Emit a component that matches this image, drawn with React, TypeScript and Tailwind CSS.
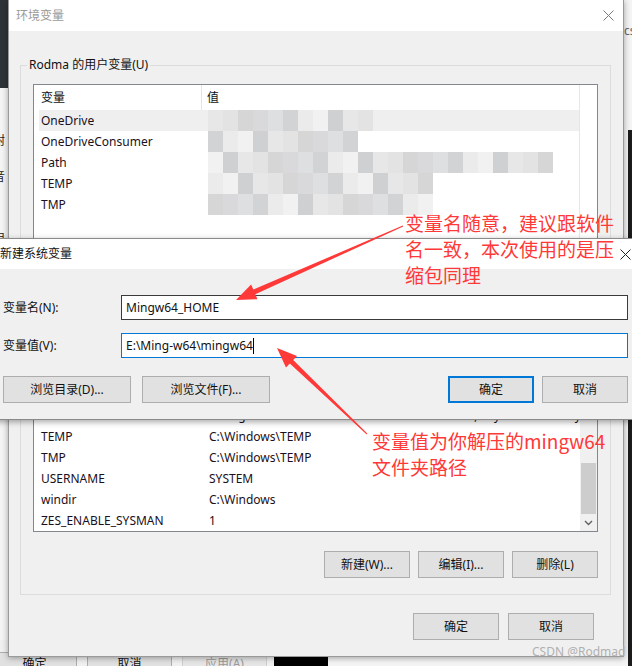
import React from "react";

const ui = "font-['Noto_Sans','Noto_Sans_CJK_SC',sans-serif]";
const cjk = "font-['Noto_Sans_CJK_SC','Noto_Sans',sans-serif]";

// pixelated "blurred" value cells
const palette = ["#d9d9db", "#e3e3e3", "#d2d3d5", "#ebebeb", "#dedfe0", "#cfd0d2", "#e7e7e8", "#f1f1f1", "#d6d6d6"];

function mosaic(seed: number, count: number) {
  let s = seed;
  const out: string[] = [];
  for (let i = 0; i < count; i++) {
    s = (s * 9301 + 49297) % 233280;
    out.push(palette[s % palette.length]);
  }
  return out;
}

const userRows = [
  { name: "OneDrive", blocks: 11, selected: true },
  { name: "OneDriveConsumer", blocks: 10 },
  { name: "Path", blocks: 23 },
  { name: "TEMP", blocks: 15 },
  { name: "TMP", blocks: 15 },
];

const systemRows = [
  { name: "PROCESSOR_IDENTIFIER", value: "Intel64 Family 6 Model 140 Stepping 1, GenuineIntel" },
  { name: "PROCESSOR_LEVEL", value: "6" },
  { name: "PROCESSOR_REVISION", value: "8c01" },
  { name: "PSModulePath", value: "%ProgramFiles%\\WindowsPowerShell\\Modules;%SystemRoot%\\system32\\Windo" },
  { name: "TEMP", value: "C:\\Windows\\TEMP" },
  { name: "TMP", value: "C:\\Windows\\TEMP" },
  { name: "USERNAME", value: "SYSTEM" },
  { name: "windir", value: "C:\\Windows" },
  { name: "ZES_ENABLE_SYSMAN", value: "1" },
];

function CloseIcon({ className }: { className?: string }) {
  return (
    <svg width="11" height="11" viewBox="0 0 11 11" className={className}>
      <path d="M0.5 0.5 L10.5 10.5 M10.5 0.5 L0.5 10.5" stroke="currentColor" strokeWidth="1" fill="none" />
    </svg>
  );
}

function WinButton({ children, primary, w = "w-[86px]" }: { children: React.ReactNode; primary?: boolean; w?: string }) {
  return (
    <div
      className={`${w} h-[27px] shrink-0 flex items-center justify-center bg-[#e1e1e1] text-[12px] text-[#111] ${
        primary ? "border-2 border-[#0078d7]" : "border border-[#adadad]"
      }`}
    >
      {children}
    </div>
  );
}

function MainWindow() {
  return (
    <div className="absolute left-[8px] top-0 w-[616px] h-[657px] flex flex-col bg-[#f0f0f0] border-x border-b border-[#9a9a9a] shadow-[0_1px_6px_rgba(0,0,0,0.35)]">
      {/* title bar (inactive) */}
      <div className="h-[31px] bg-white flex items-center justify-between pl-[7px] pr-[9px]">
        <span className="text-[12px] text-[#9a9a9a]">环境变量</span>
        <CloseIcon className="text-[#7a7a7a]" />
      </div>

      <div className="flex flex-col pl-[11px] pr-[12px] pt-[26px]">
        {/* user variables */}
        <fieldset className="min-w-0 h-[225px] border border-[#dcdcdc]">
          <legend className="ml-[6px] px-[2px] text-[12px] leading-[16px] text-[#111]">Rodma 的用户变量(U)</legend>
          <div className="px-[12px] pt-[11px]">
            <div className="h-[160px] bg-white border border-[#828790] flex">
              <div className="flex-1 min-w-0 flex flex-col overflow-hidden">
                <div className="h-[25px] flex items-center text-[12px] text-[#111]">
                  <div className="w-[168px] h-full flex items-center pl-[7px] border-r border-[#e5e5e5]">变量</div>
                  <div className="pl-[5px]">值</div>
                </div>
                {userRows.map((r, i) => (
                  <div
                    key={r.name}
                    className={`ml-[5px] h-[21px] flex items-center text-[12px] text-[#1a1020] ${r.selected ? "bg-[#efefef]" : ""}`}
                  >
                    <div className="w-[163px] shrink-0 pl-[2px]">{r.name}</div>
                    <div className="ml-[6px] flex h-full">
                      {mosaic(i * 17 + 5, r.blocks).map((c, j) => (
                        <div key={j} className="w-[15px] h-full" style={{ backgroundColor: c }} />
                      ))}
                    </div>
                  </div>
                ))}
              </div>
              <div className="w-[18px] shrink-0 border-l border-[#e6e6e6]" />
            </div>
          </div>
        </fieldset>

        {/* system variables */}
        <fieldset className="min-w-0 mt-[7px] h-[306px] border border-[#dcdcdc]">
          <legend className="ml-[6px] px-[2px] text-[12px] leading-[16px] text-[#111]">系统变量(S)</legend>
          <div className="px-[12px] pt-[11px] flex flex-col">
            <div className="h-[216px] bg-white border border-[#828790] flex">
              <div className="flex-1 min-w-0 flex flex-col overflow-hidden">
                <div className="h-[25px] flex items-center text-[12px] text-[#111]">
                  <div className="w-[168px] h-full flex items-center pl-[7px] border-r border-[#e5e5e5]">变量</div>
                  <div className="pl-[5px]">值</div>
                </div>
                {systemRows.map((r) => (
                  <div key={r.name} className="ml-[5px] h-[21px] flex items-center text-[12px] text-[#1a1020] whitespace-nowrap">
                    <div className="w-[163px] shrink-0 pl-[2px]">{r.name}</div>
                    <div className="pl-[7px] min-w-0 overflow-hidden">{r.value}</div>
                  </div>
                ))}
              </div>
              <div className="w-[17px] shrink-0 flex flex-col bg-[#f0f0f0]">
                <div className="h-[17px]" />
                <div className="flex-1 flex flex-col justify-end px-[1px]">
                  <div className="h-[51px] bg-[#cdcdcd]" />
                </div>
                <div className="h-[17px] flex items-center justify-center">
                  <svg width="9" height="6" viewBox="0 0 9 6">
                    <path d="M1 1 L4.5 4.5 L8 1" stroke="#606060" strokeWidth="1.4" fill="none" />
                  </svg>
                </div>
              </div>
            </div>
            <div className="mt-[19px] flex justify-end gap-[8px]">
              <WinButton>新建(W)...</WinButton>
              <WinButton>编辑(I)...</WinButton>
              <WinButton>删除(L)</WinButton>
            </div>
          </div>
        </fieldset>

        <div className="mt-[18px] pr-[17px] flex justify-end gap-[9px]">
          <WinButton>确定</WinButton>
          <WinButton>取消</WinButton>
        </div>
      </div>
    </div>
  );
}

function NewVarDialog() {
  return (
    <div className="absolute left-[-8px] top-[238px] w-[644px] h-[182px] flex flex-col bg-[#f0f0f0] border border-[#8a8a8a] shadow-[0_2px_6px_rgba(0,0,0,0.35)]">
      <div className="h-[30px] bg-white flex items-center justify-between pl-[7px] pr-[4px]">
        <span className="text-[12px] text-[#111]">新建系统变量</span>
        <CloseIcon className="text-[#222]" />
      </div>
      <div className="flex flex-col pt-[26px] pl-[10px] pr-[7px]">
        <div className="flex items-center">
          <div className="w-[118px] text-[12px] text-[#111]">变量名(N):</div>
          <div className="w-[507px] h-[25px] bg-white border border-[#3a3a3a] flex items-center pl-[4px] text-[12px] text-[#111]">
            Mingw64_HOME
          </div>
        </div>
        <div className="mt-[13px] flex items-center">
          <div className="w-[118px] text-[12px] text-[#111]">变量值(V):</div>
          <div className="w-[507px] h-[25px] bg-white border border-[#0078d7] flex items-center pl-[4px] text-[12px] text-[#111]">
            E:\Ming-w64\mingw64
            <span className="w-px h-[16px] bg-black" />
          </div>
        </div>
        <div className="mt-[18px] flex items-center">
          <WinButton w="w-[128px]">浏览目录(D)...</WinButton>
          <div className="ml-[11px]">
            <WinButton w="w-[128px]">浏览文件(F)...</WinButton>
          </div>
          <div className="ml-auto flex gap-[8px]">
            <WinButton primary>确定</WinButton>
            <WinButton>取消</WinButton>
          </div>
        </div>
      </div>
    </div>
  );
}

export default function App() {
  return (
    <div className={`relative w-[632px] h-[666px] overflow-hidden bg-[#f4f4f4] ${ui}`}>
      {/* desktop / windows behind */}
      <div className="absolute left-0 top-0 w-[8px] h-[88px] bg-[#2e3338]" />
      <div className="absolute left-[-7px] top-[132px] flex flex-col gap-[18px] text-[12px] text-[#222]">
        <span>尉</span>
        <span>音</span>
        <span className="mt-[26px]">阻</span>
      </div>
      <div className="absolute left-[628px] top-[130px] w-[4px] h-[536px] bg-[#1c1c1c]" />
      <div className="absolute left-[624px] top-[22px] text-[12px] text-[#666]">cs</div>
      <div className="absolute left-0 top-[640px] w-[274px] h-[26px] flex gap-[10px] pt-[12px] bg-[#f0f0f0]">
        <div className="ml-[-8px] w-[85px] h-[24px] flex items-center justify-center bg-[#e1e1e1] border border-[#adadad] text-[12px] text-[#111]">
          确定
        </div>
        <div className="w-[85px] h-[24px] flex items-center justify-center bg-[#e1e1e1] border border-[#adadad] text-[12px] text-[#111]">
          取消
        </div>
        <div className="w-[85px] h-[24px] flex items-center justify-center bg-[#e6e6e6] border border-[#cfcfcf] text-[12px] text-[#9a9a9a]">
          应用(A)
        </div>
      </div>
      <div className="absolute left-[274px] top-[657px] w-[54px] h-[9px] bg-black" />

      <MainWindow />
      <NewVarDialog />

      {/* annotations */}
      <div className={`absolute left-[405px] top-[210px] text-[19px] leading-[26px] text-[#ff3838] ${cjk}`}>
        <div>变量名随意，建议跟软件</div>
        <div>名一致，本次使用的是压</div>
        <div>缩包同理</div>
      </div>
      <div className={`absolute left-[372px] top-[428px] text-[19px] leading-[26px] text-[#ff3838] ${cjk}`}>
        <div>变量值为你解压的mingw64</div>
        <div>文件夹路径</div>
      </div>
      <svg className="absolute left-0 top-0 pointer-events-none" width="632" height="666" viewBox="0 0 632 666">
        <polygon
          points="403.2,226.5 255.3,294.2 257.5,299.2 236,300 251.1,284.6 253.3,289.6 402.8,225.5"
          fill="#ff3838"
        />
        <polygon
          points="367.3,433.6 293.2,360 297,356 277,348 286,367.6 289.8,363.6 366.7,434.4"
          fill="#ff3838"
        />
      </svg>
      <div className="absolute left-[532px] top-[643px] text-[12px] text-[#b0b0b0]">CSDN @Rodmad</div>
    </div>
  );
}
